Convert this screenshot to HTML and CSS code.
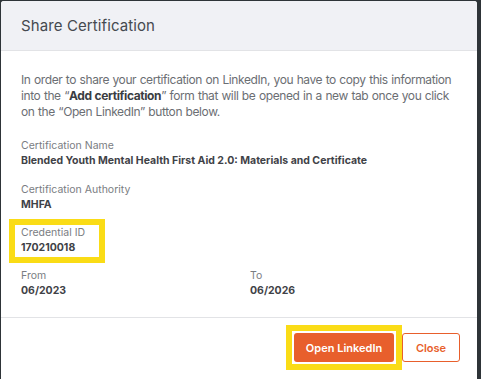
FILE: index.html
```html
<!DOCTYPE html>
<html>
<head>
    <title>Share Certification</title>
    <link rel="stylesheet" href="styles.css">
</head>
<body>
    <div class="modal">
        <div class="modal-header">
            <h2>Share Certification</h2>
        </div>

        <div class="modal-body">
            <p class="intro">In order to share your certification on LinkedIn, you have to copy this information into the “<b>Add certification</b>” form that will be opened in a new tab once you click on the “Open LinkedIn” button below.</p>

            <div class="field">
                <div class="label">Certification Name</div>
                <div class="value">Blended Youth Mental Health First Aid 2.0: Materials and Certificate</div>
            </div>

            <div class="field">
                <div class="label">Certification Authority</div>
                <div class="value">MHFA</div>
            </div>

            <div class="field highlight">
                <div class="label">Credential ID</div>
                <div class="value">170210018</div>
            </div>

            <div class="field-row">
                <div class="field">
                    <div class="label">From</div>
                    <div class="value">06/2023</div>
                </div>
                <div class="field">
                    <div class="label">To</div>
                    <div class="value">06/2026</div>
                </div>
            </div>
        </div>

        <div class="modal-footer">
            <span class="btn-highlight">
                <button class="btn btn-primary">Open LinkedIn</button>
            </span>
            <button class="btn btn-outline">Close</button>
        </div>
    </div>
</body>
</html>
```

FILE: styles.css
```css
body {
    margin: 0;
    background-color: #2e3438;
    font-family: Inter, "Noto Sans", sans-serif;
    height: 379px;
    overflow: hidden;
}
.modal {
    width: 476px;
    margin: 1px 0 0 1px;
    background-color: #fff;
    border-radius: 3px;
}
.modal-header {
    background-color: #f0f1f5;
    height: 49px;
    border-bottom: 1px solid #e2e3e6;
    border-radius: 3px 3px 0 0;
    display: flex;
    align-items: center;
    padding: 0 20px;
}
.modal-header h2 {
    margin: 0;
    font-size: 15px;
    font-weight: 400;
    color: #45494f;
    letter-spacing: 0.1px;
}
.modal-body {
    padding: 21px 20px 0 20px;
    height: 266px;
    box-sizing: border-box;
}
.intro {
    margin: 0 0 19px;
    font-size: 12px;
    line-height: 16px;
    color: #6b6e73;
    letter-spacing: -0.4px;
    word-spacing: 0.5px;
}
.intro b {
    color: #3a3d42;
    font-weight: 700;
}
.field {
    margin-bottom: 15px;
}
.label {
    font-size: 10.5px;
    line-height: 14px;
    color: #7a7d82;
}
.value {
    font-size: 10.5px;
    line-height: 15px;
    font-weight: 700;
    color: #3f4247;
}
.highlight {
    width: fit-content;
    margin: -2px 0 12px -6px;
    padding: 1px 14px 2px 6px;
    outline: 6px solid #fadc16;
}
.field-row {
    display: grid;
    grid-template-columns: 229px 1fr;
}
.modal-footer {
    border-top: 1px solid #e2e3e6;
    height: 57px;
    display: flex;
    justify-content: flex-end;
    align-items: flex-start;
    gap: 8px;
    padding: 15px 17px 0 0;
}
.btn-highlight {
    display: flex;
    outline: 6px solid #fadc16;
    outline-offset: 2px;
}
.btn {
    height: 29px;
    border-radius: 3px;
    font-family: Inter, "Noto Sans", sans-serif;
    font-size: 11px;
    font-weight: 600;
    cursor: pointer;
}
.btn-primary {
    width: 100px;
    background-color: #e85f2c;
    color: #fff;
    border: none;
}
.btn-outline {
    width: 58px;
    background-color: #fff;
    color: #e85f2c;
    border: 1px solid #e85f2c;
}
```
